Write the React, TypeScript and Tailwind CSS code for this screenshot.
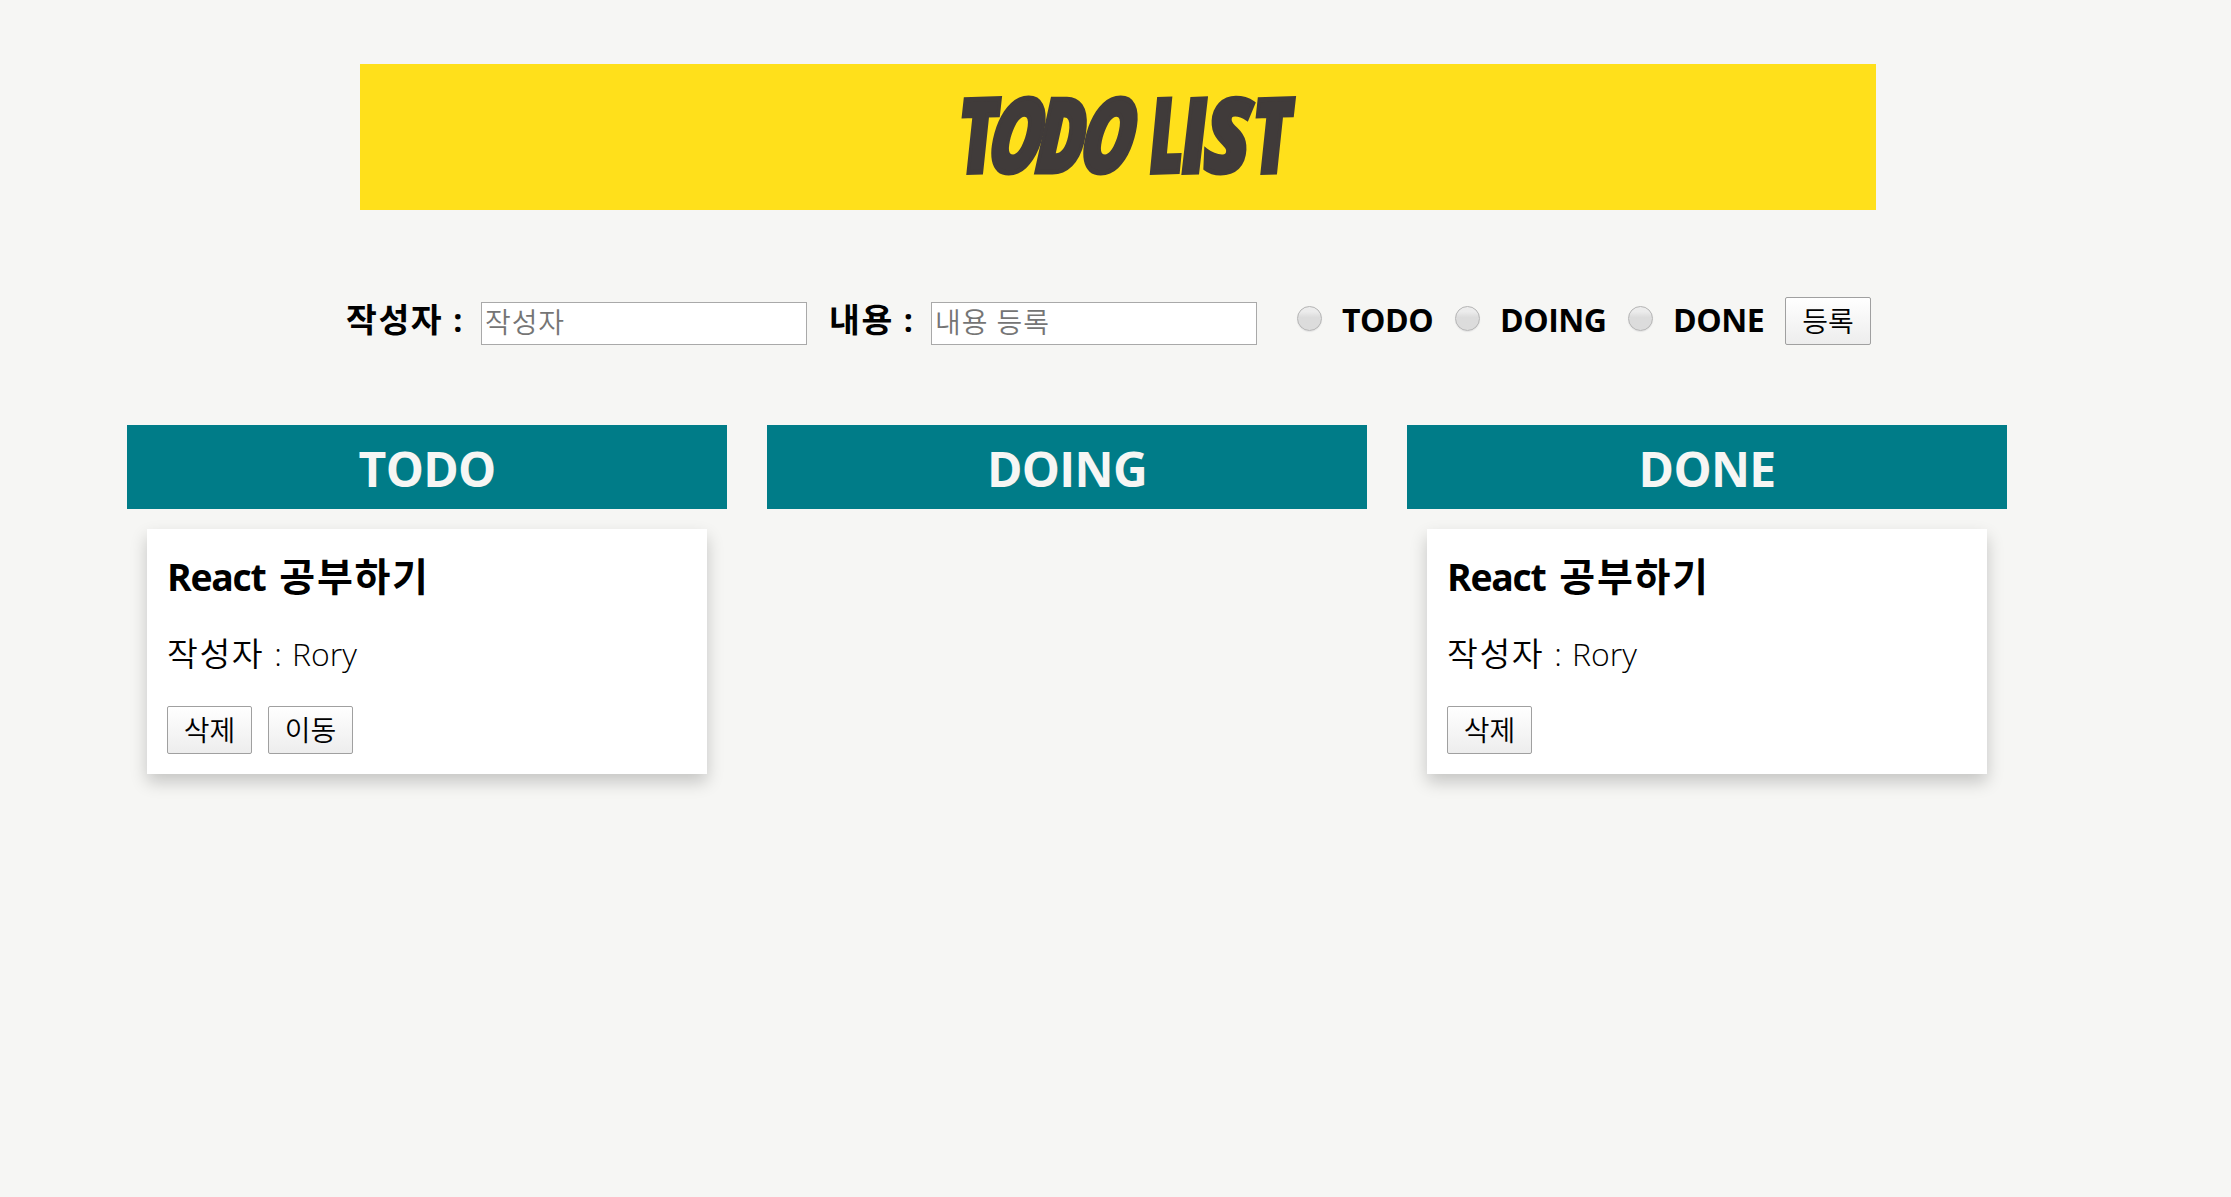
import React from "react";

const BUTTON =
  "h-12 rounded-[2px] border border-[#a0a0a0] bg-linear-to-b from-white to-[#ededed] text-center text-[28px] leading-[46px] font-[350] text-black";

type Task = { title: [string, string]; author: string; actions: string[] };

const COLUMNS: { name: string; tasks: Task[] }[] = [
  { name: "TODO", tasks: [{ title: ["React", "공부하기"], author: "Rory", actions: ["삭제", "이동"] }] },
  { name: "DOING", tasks: [] },
  { name: "DONE", tasks: [{ title: ["React", "공부하기"], author: "Rory", actions: ["삭제"] }] },
];

const STATUSES = [
  { name: "TODO", box: "w-[113px]" },
  { name: "DOING", box: "w-[128px]" },
  { name: "DONE", box: "w-[112px]" },
];

const TITLE = [
  { char: "T", cell: "w-10", shape: "scale-x-[0.68] -rotate-2" },
  { char: "O", cell: "w-10", shape: "scale-x-[0.7] -skew-x-12" },
  { char: "D", cell: "w-12", shape: "scale-x-[0.7] -skew-x-6" },
  { char: "O", cell: "w-12", shape: "scale-x-[0.7] -skew-x-12" },
  { char: " ", cell: "w-[18px]", shape: "" },
  { char: "L", cell: "w-7", shape: "scale-x-[0.62] -rotate-2" },
  { char: "I", cell: "w-7", shape: "scale-x-[0.72] -rotate-2" },
  { char: "S", cell: "w-[40px]", shape: "scale-x-[0.82] -skew-x-3" },
  { char: "T", cell: "w-[48px]", shape: "scale-x-[0.68] -rotate-2" },
];

function Header() {
  return (
    <header className="ml-[360px] flex h-[146px] w-[1516px] justify-center bg-[#ffe01b]">
      <h1 className="ml-[18px] flex font-['Open_Sans'] text-[102px] leading-[137px] font-extrabold whitespace-pre text-[#403b3a] italic [-webkit-text-stroke:5px_#403b3a]">
        {TITLE.map((t, i) => (
          <span key={i} className={`${t.cell} flex justify-center`}>
            <span className={`${t.shape} inline-block`}>{t.char}</span>
          </span>
        ))}
      </h1>
    </header>
  );
}

function Field({ label, placeholder, labelBox }: { label: string; placeholder: string; labelBox: string }) {
  return (
    <label className="flex">
      <span className={`${labelBox} -mt-[2px] h-12 text-[32px] leading-[48px] font-bold whitespace-pre`}>
        <span className="text-[33.5px] tracking-[1.6px]">{label}</span>
        <span className="ml-[10px]">:</span>
      </span>
      <input
        className="mt-[5px] h-[43px] w-[326px] border border-[#a9a9a9] bg-white pb-[4px] pl-[3px] text-[28px] leading-9 font-[350] tracking-[0.9px] placeholder:text-[#757575]"
        placeholder={placeholder}
      />
    </label>
  );
}

function EntryForm() {
  return (
    <form className="mt-[87px] ml-[346px] flex h-12" onSubmit={(e) => e.preventDefault()}>
      <Field label="작성자" placeholder="작성자" labelBox="w-[135px]" />
      <div className="w-[22px]" />
      <Field label="내용" placeholder="내용 등록" labelBox="w-[102px]" />
      <div className="w-10" />
      {STATUSES.map((s) => (
        <label key={s.name} className="flex">
          <input
            type="radio"
            name="status"
            className="mt-[9px] mr-[21px] size-[25px] appearance-none rounded-full border border-[#b4b4b4] bg-linear-to-b from-[#ececec] from-20% to-[#dcdcdc] to-45% shadow-[0_1px_1px_#e4e4e4]"
          />
          <span className={`${s.box} -ml-px text-[32px] leading-[46px] font-bold tracking-[-0.5px]`}>{s.name}</span>
        </label>
      ))}
      <button className={`${BUTTON} w-[86px]`}>등록</button>
    </form>
  );
}

function Card({ task }: { task: Task }) {
  return (
    <article className="mx-5 mt-5 h-[245px] bg-white px-5 pt-5 shadow-[0_8px_16px_rgba(0,0,0,0.2)]">
      <h3 className="h-[54px] text-[37.4px] leading-[54px] font-bold whitespace-pre">
        <span className="tracking-[-1.3px]">{task.title[0]}</span>
        <span className="ml-[14px] text-[39px] tracking-[1.7px]">{task.title[1]}</span>
      </h3>
      <p className="mt-[26px] h-[50px] text-[32px] leading-12 font-[350] whitespace-pre">
        <span className="text-[33.5px] tracking-[1.6px]">작성자</span>
        <span className="mx-[10px]">:</span>
        {task.author}
      </p>
      <div className="mt-[27px] flex gap-4">
        {task.actions.map((a) => (
          <button key={a} className={`${BUTTON} w-[85px]`}>
            {a}
          </button>
        ))}
      </div>
    </article>
  );
}

export default function App() {
  return (
    <main className="min-h-screen bg-[#f6f6f4] pt-16 font-['Open_Sans','Noto_Sans_CJK_KR',sans-serif] text-black">
      <Header />
      <EntryForm />
      <section className="mt-20 ml-[127px] flex gap-10">
        {COLUMNS.map((c) => (
          <div key={c.name} className="w-[600px]">
            <h2 className="h-[84px] bg-[#007c88] pt-px text-center text-[48px] leading-[86px] font-bold tracking-[-0.7px] text-[#f6f6f4]">
              {c.name}
            </h2>
            {c.tasks.map((t, i) => (
              <Card key={i} task={t} />
            ))}
          </div>
        ))}
      </section>
    </main>
  );
}
